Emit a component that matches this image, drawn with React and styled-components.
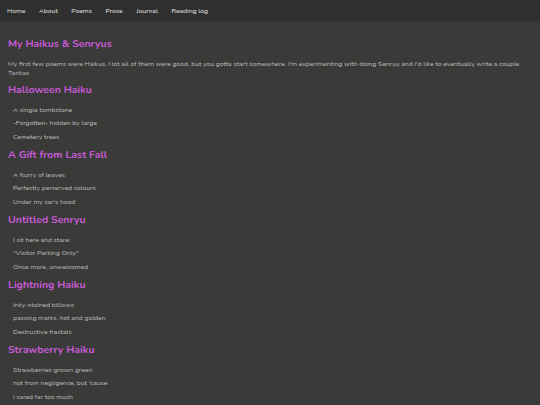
import styled, { createGlobalStyle } from 'styled-components';

const GlobalStyle = createGlobalStyle`
  html, body {
    margin: 0;
    padding: 0;
    background: #3a3a39;
  }
  body {
    font-family: 'Nunito', 'Open Sans', 'Noto Sans', sans-serif;
    color: #bdbdbd;
  }
`;

const NavBar = styled.nav`
  display: flex;
  align-items: center;
  gap: 13.5px;
  height: 21px;
  padding: 0 7px;
  background: #2f2f2f;
`;

const NavLink = styled.a`
  color: #e2e2e2;
  font-size: 6.8px;
  text-decoration: none;
`;

const Main = styled.main`
  display: flex;
  flex-direction: column;
  padding: 0 8px 20px;
`;

const Title = styled.h1`
  margin: 16px 0 0;
  font-size: 10.5px;
  line-height: 14px;
  font-weight: 700;
  color: #c95ad8;
`;

const Intro = styled.p`
  margin: 7.5px 0 0;
  max-width: 514px;
  font-size: 6.75px;
  line-height: 9px;
`;

const PoemTitle = styled.h2`
  margin: ${({ $first }) => ($first ? '6.5px' : '7.5px')} 0 0;
  font-size: 10.5px;
  line-height: 14px;
  font-weight: 700;
  color: #c95ad8;
`;

const Verse = styled.div`
  display: flex;
  flex-direction: column;
  gap: 4.5px;
  margin-top: 7.5px;
  padding-left: 5px;
`;

const Line = styled.p`
  margin: 0;
  font-size: 6.75px;
  line-height: 9px;
`;

const links = ['Home', 'About', 'Poems', 'Prose', 'Journal', 'Reading log'];

const poems = [
  {
    title: 'Halloween Haiku',
    lines: ['A single tombstone', '-Forgotten- hidden by large', 'Cemetery trees'],
  },
  {
    title: 'A Gift from Last Fall',
    lines: ['A flurry of leaves', 'Perfectly perserved colours', "Under my car's hood"],
  },
  {
    title: 'Untitled Senryu',
    lines: ['I sit here and stare:', '"Visitor Parking Only"', 'Once more, unwelcomed'],
  },
  {
    title: 'Lightning Haiku',
    lines: ['Inky-stained billows', 'passing marks, hot and golden', 'Destructive fractals'],
  },
  {
    title: 'Strawberry Haiku',
    lines: ['Strawberries grown green', "not from negligence, but 'cause", 'I cared far too much'],
  },
];

const App = () => {
  return (
    <>
      <GlobalStyle />
      <NavBar>
        {links.map((l) => (
          <NavLink key={l} href="#">{l}</NavLink>
        ))}
      </NavBar>
      <Main>
        <Title>My Haikus &amp; Senryus</Title>
        <Intro>
          My first few poems were Haikus. Not all of them were good, but you gotta start somewhere.
          I'm experimenting with doing Senryu and I'd like to eventually write a couple Tankas
        </Intro>
        {poems.map((p, i) => (
          <section key={p.title}>
            <PoemTitle $first={i === 0}>{p.title}</PoemTitle>
            <Verse>
              {p.lines.map((line) => (
                <Line key={line}>{line}</Line>
              ))}
            </Verse>
          </section>
        ))}
      </Main>
    </>
  );
};

export default App;
